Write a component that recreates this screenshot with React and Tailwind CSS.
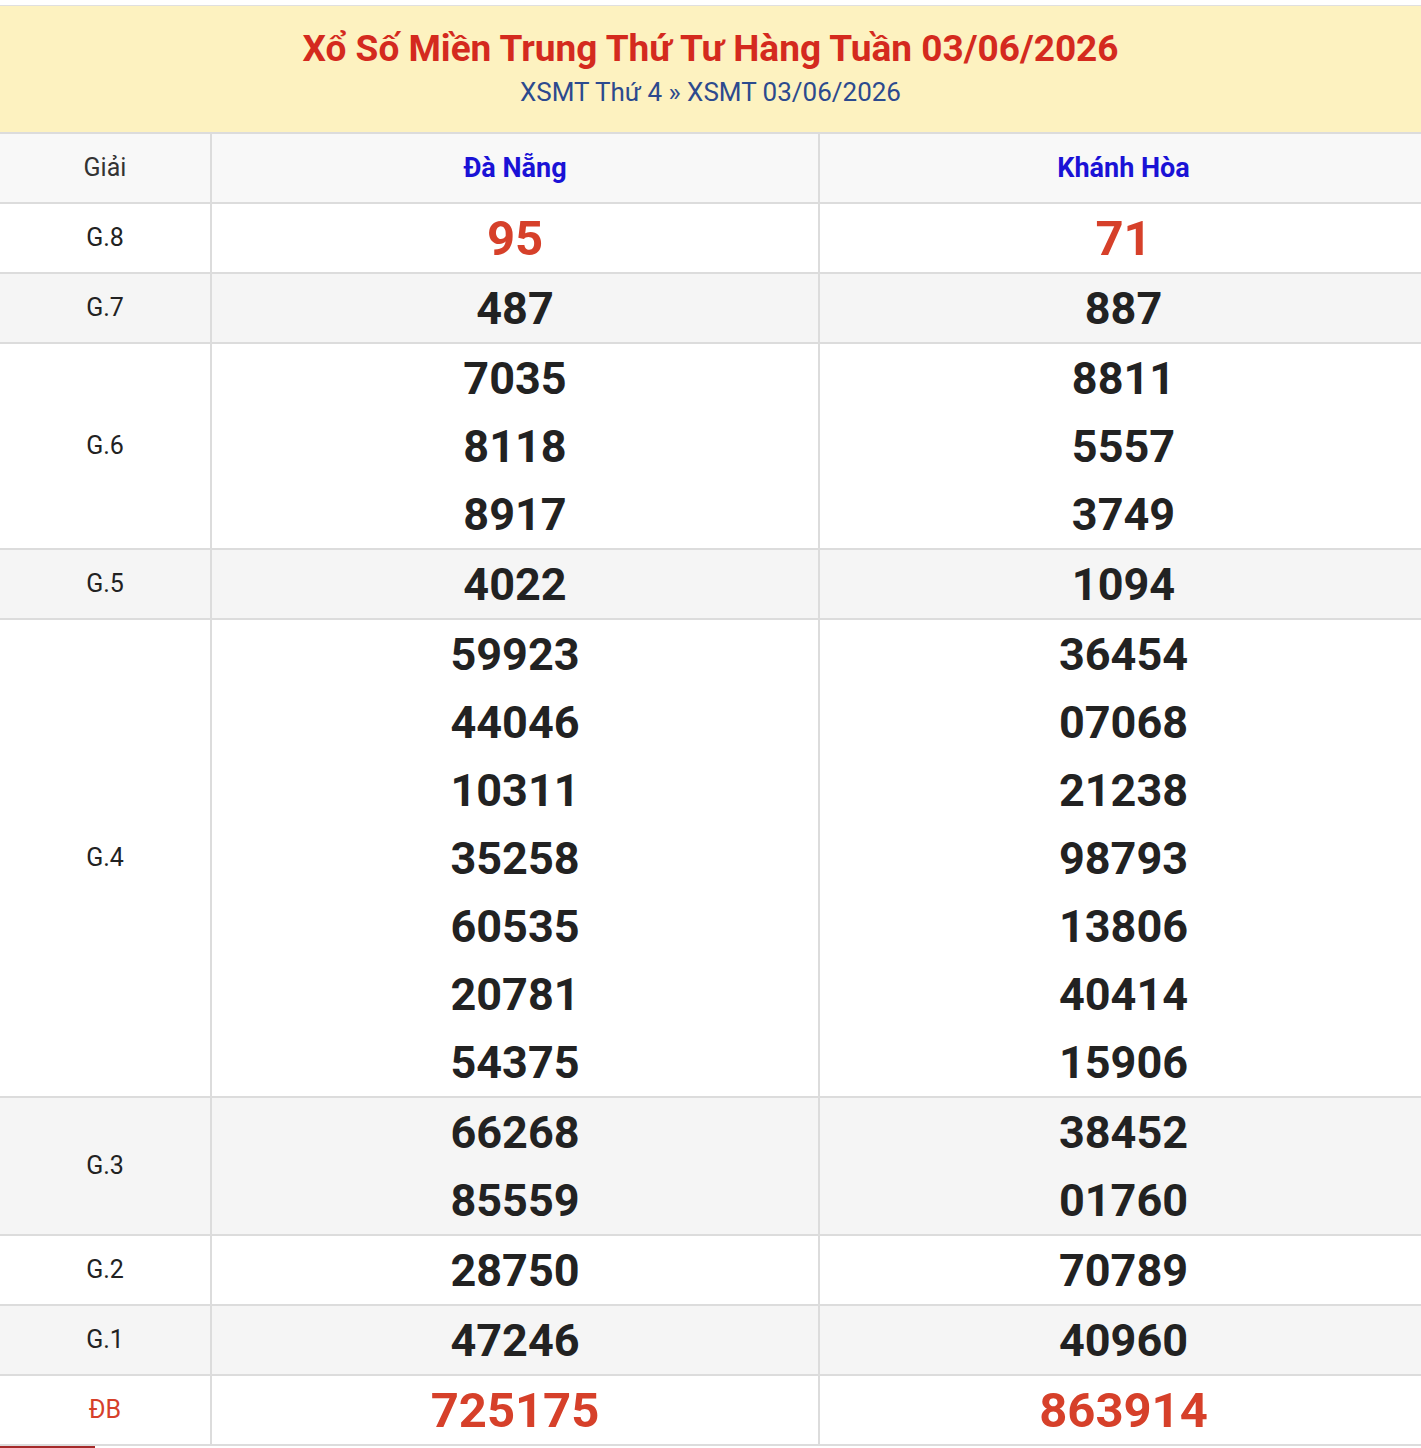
export default function App() {
  const rows = [
    ["G.8", ["95"], ["71"], true],
    ["G.7", ["487"], ["887"]],
    ["G.6", ["7035", "8118", "8917"], ["8811", "5557", "3749"]],
    ["G.5", ["4022"], ["1094"]],
    ["G.4", ["59923", "44046", "10311", "35258", "60535", "20781", "54375"], ["36454", "07068", "21238", "98793", "13806", "40414", "15906"]],
    ["G.3", ["66268", "85559"], ["38452", "01760"]],
    ["G.2", ["28750"], ["70789"]],
    ["G.1", ["47246"], ["40960"]],
    ["ĐB", ["725175"], ["863914"], true],
  ];
  const f = { fontFamily: "Roboto, 'Liberation Sans', sans-serif" };
  return (
    <div className="w-[1421px] bg-white" style={f}>
      <div className="h-[6px] bg-white border-b border-[#e0e0e0]" />
      <div className="h-[128px] bg-[#fdf2c0] flex flex-col items-center border-b-2 border-[#dcdcdc]">
        <div className="mt-[20px] text-[37px] leading-[46px] font-bold text-[#d42a1e]">Xổ Số Miền Trung Thứ Tư Hàng Tuần 03/06/2026</div>
        <div className="mt-[4px] text-[26px] leading-[32px] text-[#2c4a8e]">XSMT Thứ 4 » XSMT 03/06/2026</div>
      </div>
      <div className="flex h-[70px] border-b-2 border-[#dcdcdc] bg-[#f8f8f8]">
        <div className="w-[212px] border-r-2 border-[#dcdcdc] flex items-center justify-center text-[25px] text-[#333]">Giải</div>
        <div className="w-[608px] border-r-2 border-[#dcdcdc] flex items-center justify-center text-[27px] font-bold text-[#1a12d6]">Đà Nẵng</div>
        <div className="flex-1 flex items-center justify-center pl-[6px] text-[27px] font-bold text-[#1a12d6]">Khánh Hòa</div>
      </div>
      {rows.map(([g, a, b, red], i) => (
        <div key={g} className={"flex border-b-2 border-[#dcdcdc] " + (i % 2 ? "bg-[#f5f5f5]" : "bg-white")}>
          <div className={"w-[212px] border-r-2 border-[#dcdcdc] flex items-center justify-center text-[25px] " + (g === "ĐB" ? "text-[#d6402a]" : "text-[#222]")}>{g}</div>
          {[a, b].map((col, j) => (
            <div key={j} className={(j === 0 ? "w-[608px] border-r-2 border-[#dcdcdc] " : "flex-1 pl-[6px] ") + "flex flex-col items-center"}>
              {col.map((n, k) => (
                <div key={k} className={"h-[68px] flex items-center font-bold pt-[2px] " + (red ? "text-[49px] text-[#d6402a]" : "text-[45px] text-[#222]")}>{n}</div>
              ))}
            </div>
          ))}
        </div>
      ))}
      <div className="flex h-[2px]"><div className="w-[95px] bg-[#a52a2a]" /></div>
    </div>
  );
}
